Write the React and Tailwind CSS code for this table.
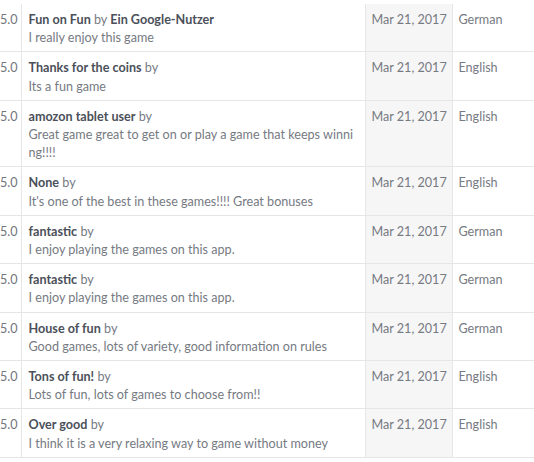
const reviews = [
  { title: "Fun on Fun", author: "Ein Google-Nutzer", body: "I really enjoy this game", lang: "German" },
  { title: "Thanks for the coins", author: "", body: "Its a fun game", lang: "English" },
  { title: "amozon tablet user", author: "", body: "Great game great to get on or play a game that keeps winning!!!!", lang: "English" },
  { title: "None", author: "", body: "It's one of the best in these games!!!! Great bonuses", lang: "English" },
  { title: "fantastic", author: "", body: "I enjoy playing the games on this app.", lang: "German" },
  { title: "fantastic", author: "", body: "I enjoy playing the games on this app.", lang: "German" },
  { title: "House of fun", author: "", body: "Good games, lots of variety, good information on rules", lang: "German" },
  { title: "Tons of fun!", author: "", body: "Lots of fun, lots of games to choose from!!", lang: "English" },
  { title: "Over good", author: "", body: "I think it is a very relaxing way to game without money", lang: "English" },
];

export default function App() {
  return (
    <div className="w-[534px] h-[462px] overflow-hidden bg-white pt-1 text-[12.6px] leading-[18.2px]" style={{ fontFamily: "Lato, 'Open Sans', sans-serif" }}>
      <table className="border-collapse w-[560px] table-fixed">
        <colgroup>
          <col className="w-[21px]" />
          <col className="w-[344px]" />
          <col className="w-[87px]" />
          <col className="w-[108px]" />
        </colgroup>
        <tbody>
          {reviews.map((r, i) => (
            <tr key={i} className="border-b border-[#e6e6e6] align-top">
              <td className="pt-[7px] pr-[6px] text-right text-[#70747c] border-r border-[#e6e6e6]">5.0</td>
              <td className="pt-[7px] pb-[4px] px-[7px]">
                <div className="text-[#767a82]">
                  <span className="font-bold text-[#4b505a]">{r.title}</span> by{" "}
                  {r.author && <span className="font-bold text-[#4b505a]">{r.author}</span>}
                </div>
                <div className="text-[#767a82] break-all">{r.body}</div>
              </td>
              <td className="pt-[7px] px-[6px] bg-[#f6f6f6] border-x border-[#e6e6e6] text-[#767a82] whitespace-nowrap">Mar 21, 2017</td>
              <td className="pt-[7px] px-[6px] text-[#767a82]">{r.lang}</td>
            </tr>
          ))}
        </tbody>
      </table>
    </div>
  );
}
